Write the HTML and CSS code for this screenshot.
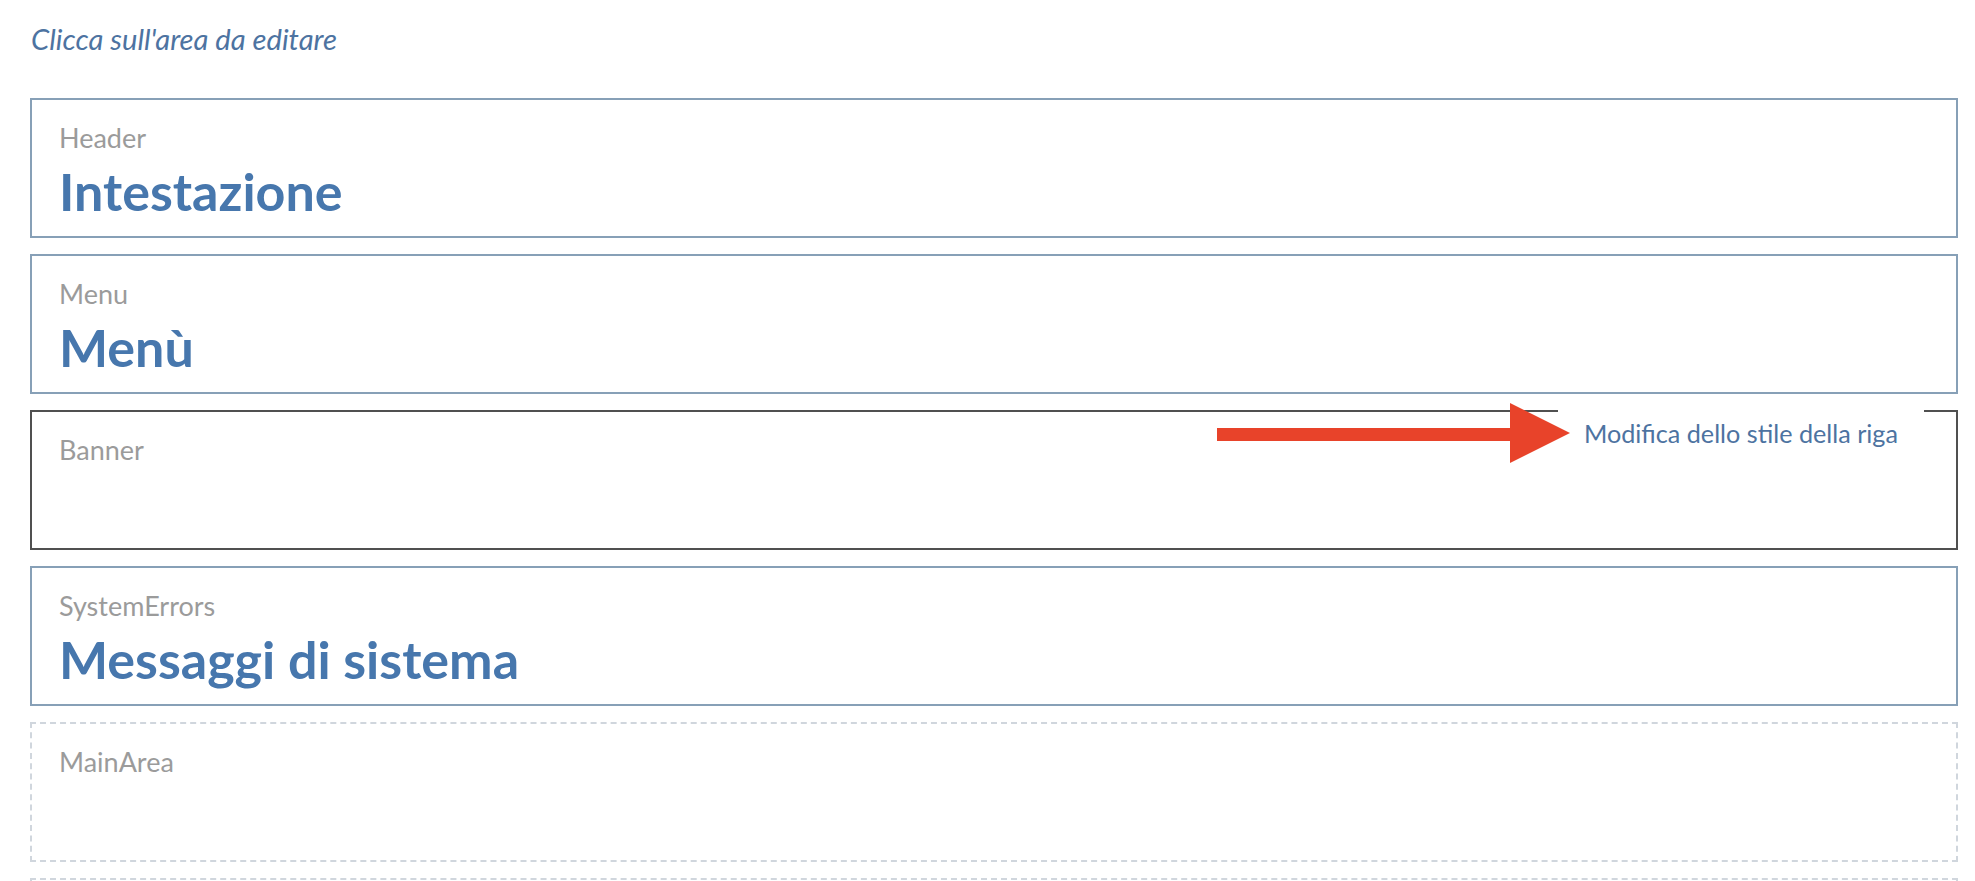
FILE: index.html
```html
<!DOCTYPE html>
<html lang="it">
<head>
<meta charset="utf-8">
<title>Layout</title>
<link rel="stylesheet" href="styles.css">
</head>
<body>
<div class="page">
  <p class="hint">Clicca sull'area da editare</p>
  <div class="areas">
    <section class="area area--set">
      <div class="area__label">Header</div>
      <div class="area__title">Intestazione</div>
    </section>
    <section class="area area--set">
      <div class="area__label">Menu</div>
      <div class="area__title">Menù</div>
    </section>
    <section class="area area--active">
      <div class="area__label">Banner</div>
      <button class="row-style" type="button">Modifica dello stile della riga</button>
    </section>
    <section class="area area--set">
      <div class="area__label">SystemErrors</div>
      <div class="area__title">Messaggi di sistema</div>
    </section>
    <section class="area area--empty">
      <div class="area__label">MainArea</div>
    </section>
    <section class="area area--empty"></section>
  </div>
  <svg class="annotation" width="380" height="80" viewBox="0 0 380 80" aria-hidden="true">
    <rect x="7" y="28" width="296" height="13" fill="#e8432a"/>
    <polygon points="300,3 300,63 360,33" fill="#e8432a"/>
  </svg>
</div>
</body>
</html>
```
FILE: styles.css
```css
* { box-sizing: border-box; }

html, body {
  margin: 0;
  padding: 0;
  background: #ffffff;
}

body {
  font-family: Lato, "Open Sans", "Noto Sans", sans-serif;
  overflow: hidden;
}

.page {
  position: relative;
  padding: 22px 17px 0 30px;
}

.hint {
  margin: 0 0 42px 1px;
  font-size: 29.2px;
  line-height: 34px;
  font-style: italic;
  color: #4d73a1;
}

.areas {
  display: flex;
  flex-direction: column;
  gap: 16px;
}

.area {
  position: relative;
  height: 140px;
  padding: 22px 27px 0 27px;
  background: #ffffff;
}

.area--set { border: 2px solid #87a0b7; }
.area--active { border: 2px solid #505050; }
.area--empty { border: 2px dashed #d0d6dd; }

.area__label {
  font-size: 27px;
  line-height: 31px;
  color: #9b9b9b;
}

.area__title {
  margin-top: 8px;
  font-size: 52px;
  line-height: 60px;
  font-weight: 700;
  color: #4777ad;
}

.row-style {
  position: absolute;
  top: -4px;
  right: 32px;
  margin: 0;
  border: 0;
  padding: 7px 26px 12px 26px;
  background: #ffffff;
  font-family: inherit;
  font-size: 25.2px;
  line-height: 36px;
  color: #4d73a1;
  cursor: pointer;
}

.annotation {
  position: absolute;
  left: 1210px;
  top: 400px;
}
```
